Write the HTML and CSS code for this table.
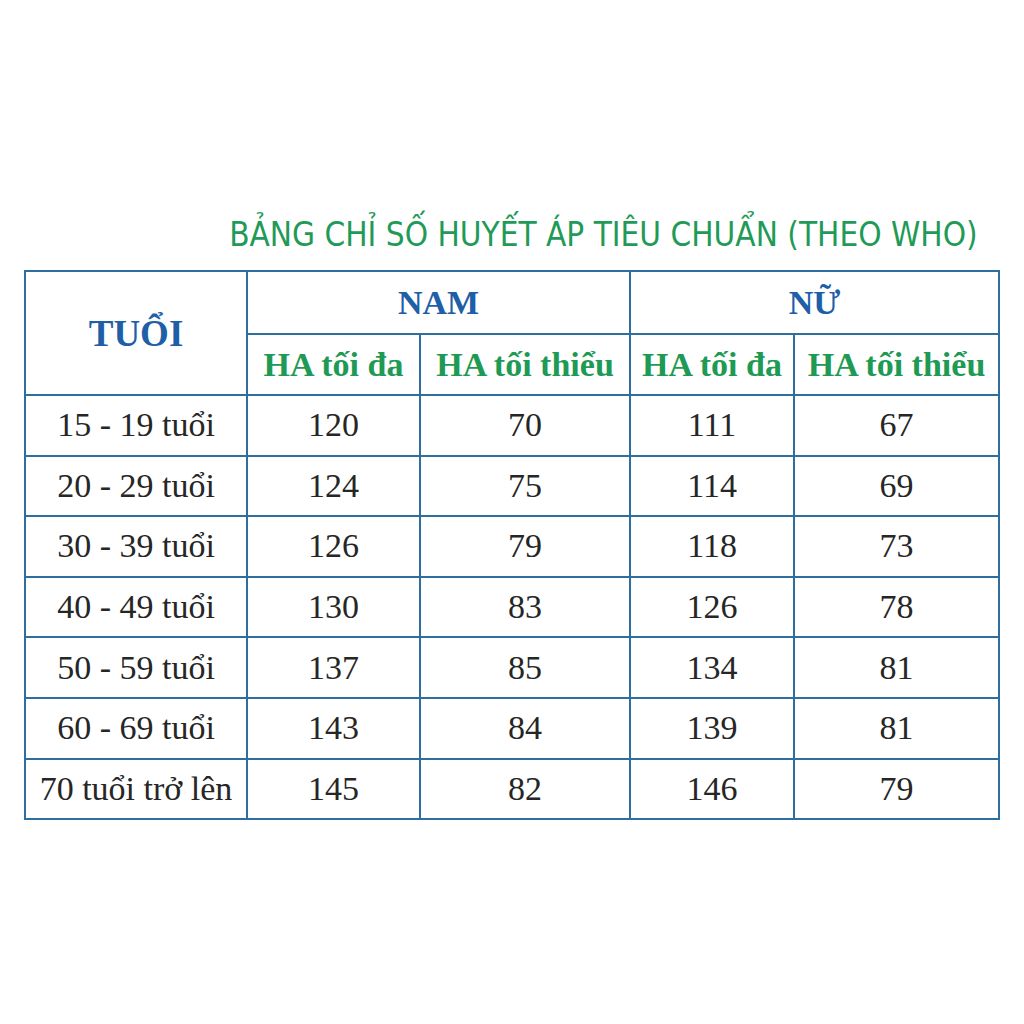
FILE: index.html
```html
<!DOCTYPE html>
<html lang="vi">
<head>
<meta charset="utf-8">
<link rel="stylesheet" href="styles.css">
</head>
<body>
<div class="page">
  <div class="title-row">
    <h1 class="title">BẢNG CHỈ SỐ HUYẾT ÁP TIÊU CHUẨN (THEO WHO)</h1>
  </div>
  <table class="bp">
    <colgroup>
      <col class="c1"><col class="c2"><col class="c3"><col class="c4"><col class="c5">
    </colgroup>
    <thead>
      <tr class="h1">
        <th rowspan="2" class="age-h">TUỔI</th>
        <th colspan="2" class="grp">NAM</th>
        <th colspan="2" class="grp">NỮ</th>
      </tr>
      <tr class="h2">
        <th class="sub">HA tối đa</th>
        <th class="sub">HA tối thiểu</th>
        <th class="sub">HA tối đa</th>
        <th class="sub">HA tối thiểu</th>
      </tr>
    </thead>
    <tbody>
      <tr><td>15 - 19 tuổi</td><td>120</td><td>70</td><td>111</td><td>67</td></tr>
      <tr><td>20 - 29 tuổi</td><td>124</td><td>75</td><td>114</td><td>69</td></tr>
      <tr><td>30 - 39 tuổi</td><td>126</td><td>79</td><td>118</td><td>73</td></tr>
      <tr><td>40 - 49 tuổi</td><td>130</td><td>83</td><td>126</td><td>78</td></tr>
      <tr><td>50 - 59 tuổi</td><td>137</td><td>85</td><td>134</td><td>81</td></tr>
      <tr><td>60 - 69 tuổi</td><td>143</td><td>84</td><td>139</td><td>81</td></tr>
      <tr><td>70 tuổi trở lên</td><td>145</td><td>82</td><td>146</td><td>79</td></tr>
    </tbody>
  </table>
</div>
</body>
</html>
```
FILE: styles.css
```css
html, body {
  margin: 0;
  padding: 0;
  background: #ffffff;
}
.page {
  width: 1024px;
  height: 1024px;
  padding-top: 215px;
  box-sizing: border-box;
}
.title-row {
  display: flex;
  justify-content: flex-end;
  padding-right: 46px;
  margin-bottom: 15px;
  height: 40px;
}
.title {
  margin: 0;
  white-space: nowrap;
  font-family: "DejaVu Sans", sans-serif;
  font-weight: normal;
  font-size: 33px;
  line-height: 40px;
  color: #1f9a57;
  transform: scaleX(0.9);
  transform-origin: right center;
}
.bp {
  margin-left: 24px;
  border-collapse: collapse;
  table-layout: fixed;
  width: 976px;
  border: 2px solid #2f6f9f;
  font-family: "Liberation Serif", serif;
}
.c1 { width: 222px; }
.c2 { width: 173px; }
.c3 { width: 210px; }
.c4 { width: 164px; }
.c5 { width: 205px; }
.bp th, .bp td {
  border: 2px solid #2f6f9f;
  padding: 0;
  text-align: center;
  vertical-align: middle;
  white-space: nowrap;
}
.h1 { height: 63px; }
.h2 { height: 61px; }
.bp tbody tr { height: 60.6px; }
.age-h {
  color: #1e5fa8;
  font-size: 37px;
  font-weight: bold;
}
.grp {
  color: #1e5fa8;
  font-size: 34px;
  font-weight: bold;
}
.sub {
  color: #1e9a55;
  font-size: 34px;
  font-weight: bold;
}
.bp td {
  color: #262626;
  font-size: 34px;
}
```
